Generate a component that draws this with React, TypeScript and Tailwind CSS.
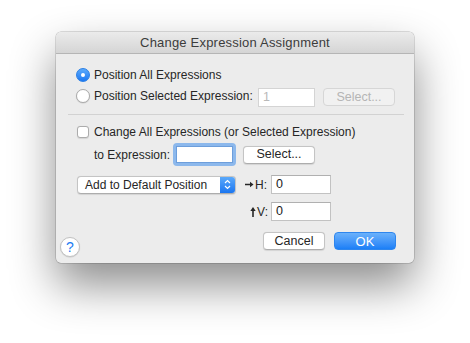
import React from "react";

const font = { fontFamily: '"Liberation Sans", Arial, sans-serif' };

function Radio({ checked }: { checked?: boolean }) {
  if (checked) {
    return (
      <div className="w-[14px] h-[14px] rounded-full bg-gradient-to-b from-[#5aa9fb] to-[#1b78f2] border border-[#2a7fe6] flex items-center justify-center shrink-0">
        <div className="w-[4px] h-[4px] rounded-full bg-white" />
      </div>
    );
  }
  return (
    <div className="w-[14px] h-[14px] rounded-full bg-white border border-[#aaaaaa] shadow-[0_0.5px_1px_rgba(0,0,0,0.15)] shrink-0" />
  );
}

function Button({ children, disabled, className = "" }: { children: React.ReactNode; disabled?: boolean; className?: string }) {
  return (
    <div
      className={`h-[18px] flex items-center justify-center rounded-[4px] border shrink-0 ${
        disabled
          ? "bg-[#f1f1f1] border-[#d6d6d6] text-[#b5b5b5]"
          : "bg-white border-[#c4c4c4] border-b-[#adadad] text-[#262626] shadow-[0_0.5px_1px_rgba(0,0,0,0.1)]"
      } text-[12.5px] leading-none ${className}`}
    >
      {children}
    </div>
  );
}

function Input({ value, className = "", disabled }: { value?: string; className?: string; disabled?: boolean }) {
  return (
    <div
      className={`bg-white border flex items-center pl-[4px] text-[12.5px] leading-none shrink-0 ${
        disabled ? "text-[#b9b9b9] border-[#d4d4d4]" : "text-[#1a1a1a] border-[#c2c2c2] border-t-[#b0b0b0]"
      } ${className}`}
    >
      {value}
    </div>
  );
}

export default function App() {
  return (
    <div className="w-[470px] h-[343px] bg-white pt-[32px] pl-[56px]" style={font}>
      <div className="w-[358px] h-[231px] rounded-[5px] bg-[#ececec] shadow-[0_22px_45px_rgba(0,0,0,0.45),0_0_0_0.5px_rgba(0,0,0,0.25)] overflow-hidden flex flex-col">
        {/* Title bar */}
        <div className="h-[22px] shrink-0 bg-gradient-to-b from-[#ebebeb] to-[#d5d5d5] border-b border-[#b5b5b5] flex items-center justify-center text-[13px] tracking-[0.2px] text-[#3c3c3c] leading-none">
          Change Expression Assignment
        </div>

        {/* Body */}
        <div className="flex flex-col text-[12px] text-[#262626] leading-none">
          {/* Row 1 */}
          <div className="mt-[14px] ml-[20px] h-[14px] flex items-center gap-[4px]">
            <Radio checked />
            <span>Position All Expressions</span>
          </div>
          {/* Row 2 */}
          <div className="mt-[6px] ml-[20px] h-[18px] flex items-center">
            <div className="w-[182px] flex items-center gap-[4px] -mt-[2px]">
              <Radio />
              <span>Position Selected Expression:</span>
            </div>
            <Input value="1" disabled className="w-[57px] h-[19px]" />
            <Button disabled className="ml-[8px] w-[72px]">Select...</Button>
          </div>
          {/* Separator */}
          <div className="mt-[8px] ml-[12px] mr-[10px] h-px bg-[#d2d2d2]" />
          {/* Row 3 */}
          <div className="mt-[10px] ml-[21px] h-[14px] flex items-center gap-[5px]">
            <div className="w-[12px] h-[12px] rounded-[3px] bg-white border border-[#acacac] shadow-[0_0.5px_1px_rgba(0,0,0,0.1)] shrink-0" />
            <span>Change All Expressions (or Selected Expression)</span>
          </div>
          {/* Row 4 */}
          <div className="mt-[4px] ml-[38px] h-[23px] flex items-center">
            <span className="w-[79px] shrink-0">to Expression:</span>
            <div className="w-[63px] h-[23px] rounded-[4px] bg-[#8cb8ec] p-[3px] shrink-0">
              <div className="w-full h-full bg-white border border-[#6d9edb]" />
            </div>
            <Button className="ml-[7px] w-[72px] h-[17px]">Select...</Button>
          </div>
          {/* Row 5 */}
          <div className="mt-[9px] ml-[21px] h-[19px] flex items-center">
            <div className="w-[159px] h-[18px] rounded-[4px] bg-white border border-[#c4c4c4] border-b-[#adadad] shadow-[0_0.5px_1px_rgba(0,0,0,0.1)] flex items-center overflow-hidden shrink-0">
              <span className="flex-1 pl-[7px] text-[12px]">Add to Default Position</span>
              <div className="w-[15px] h-full bg-gradient-to-b from-[#5aa9fb] to-[#1a76f0] flex items-center justify-center">
                <svg width="7" height="11" viewBox="0 0 7 11">
                  <path d="M1 4 L3.5 1.5 L6 4" fill="none" stroke="white" strokeWidth="1.2" />
                  <path d="M1 7 L3.5 9.5 L6 7" fill="none" stroke="white" strokeWidth="1.2" />
                </svg>
              </div>
            </div>
            <div className="ml-[9px] w-[24px] flex items-center shrink-0">
              <svg width="9" height="7" viewBox="0 0 9 7" className="mr-[1px]">
                <path d="M0 3.5 H6" stroke="#262626" strokeWidth="1.6" />
                <path d="M5 0.8 L8.5 3.5 L5 6.2 Z" fill="#262626" />
              </svg>
              <span>H:</span>
            </div>
            <Input value="0" className="ml-[2px] w-[60px] h-[19px]" />
          </div>
          {/* Row 6 */}
          <div className="mt-[8px] h-[19px] flex items-center">
            <div className="ml-[190px] w-[25px] pr-[3px] flex items-center justify-end shrink-0">
              <svg width="6" height="10" viewBox="0 0 6 10" className="mr-[1px]">
                <path d="M3 3 V10" stroke="#262626" strokeWidth="1.6" />
                <path d="M0.3 4 L3 0 L5.7 4 Z" fill="#262626" />
              </svg>
              <span>V:</span>
            </div>
            <Input value="0" className="w-[60px] h-[19px]" />
          </div>
          {/* Row 7 */}
          <div className="mt-[11px] h-[25px] flex items-start">
            <div className="ml-[4px] mt-[5px] w-[20px] h-[20px] rounded-full bg-white border border-[#c2c2c2] shadow-[0_0.5px_1px_rgba(0,0,0,0.15)] flex items-center justify-center text-[#1d7cf2] text-[14px] shrink-0">
              ?
            </div>
            <Button className="ml-[183px] w-[62px]">Cancel</Button>
            <div className="ml-[9px] w-[62px] h-[18px] rounded-[4px] bg-gradient-to-b from-[#6ab1fb] to-[#1a7ff7] border border-[#2e86ee] text-white text-[13px] flex items-center justify-center shrink-0">
              OK
            </div>
          </div>
        </div>
      </div>
    </div>
  );
}
